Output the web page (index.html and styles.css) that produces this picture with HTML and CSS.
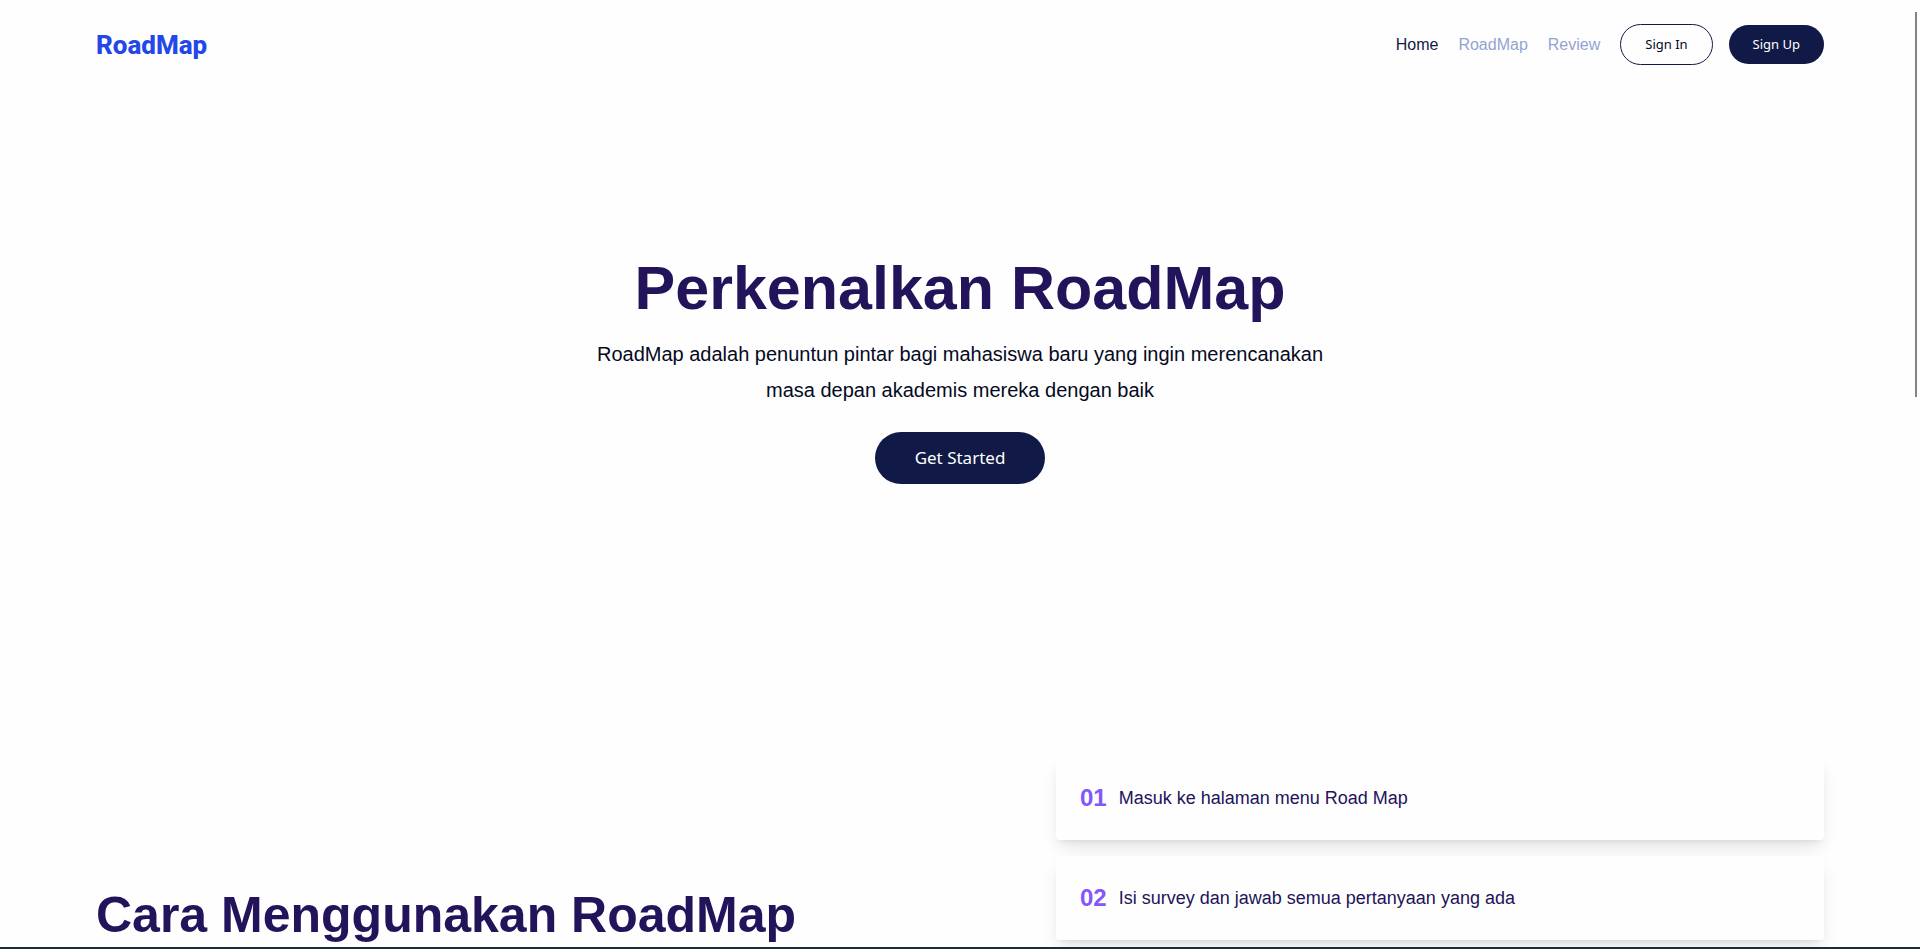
FILE: index.html
```html
<!DOCTYPE html>
<html lang="id">
<head>
<meta charset="utf-8">
<meta name="viewport" content="width=device-width, initial-scale=1">
<title>RoadMap</title>
<link rel="stylesheet" href="styles.css">
</head>
<body>
<header class="header">
  <a class="logo" href="#">RoadMap</a>
  <div class="menu">
    <nav class="nav">
      <a class="nav-link active" href="#">Home</a>
      <a class="nav-link" href="#">RoadMap</a>
      <a class="nav-link" href="#">Review</a>
    </nav>
    <div class="actions">
      <button class="btn btn-outline" type="button">Sign In</button>
      <button class="btn btn-solid" type="button">Sign Up</button>
    </div>
  </div>
</header>
<main>
  <section class="hero">
    <h1 class="hero-title">Perkenalkan RoadMap</h1>
    <p class="hero-text">RoadMap adalah penuntun pintar bagi mahasiswa baru yang ingin merencanakan masa depan akademis mereka dengan baik</p>
    <button class="btn btn-solid btn-large" type="button">Get Started</button>
  </section>
  <section class="guide">
    <h2 class="guide-title">Cara Menggunakan RoadMap</h2>
    <ol class="steps">
      <li class="step"><span class="step-number">01</span><span>Masuk ke halaman menu Road Map</span></li>
      <li class="step"><span class="step-number">02</span><span>Isi survey dan jawab semua pertanyaan yang ada</span></li>
    </ol>
  </section>
</main>
<div class="scroll-thumb" aria-hidden="true"></div>
<div class="bottom-edge" aria-hidden="true"></div>
</body>
</html>
```
FILE: styles.css
```css
* { box-sizing: border-box; }

body {
  margin: 0;
  height: 100vh;
  overflow: hidden;
  background: #fefefe;
  color: #050a1e;
  font-family: "Liberation Sans", Arial, sans-serif;
  font-size: 16px;
}

.header {
  display: flex;
  align-items: center;
  justify-content: space-between;
  padding: 24px 5% 23px;
}

.logo {
  color: #2347e8;
  font: 800 26px/40px Roboto, sans-serif;
  text-decoration: none;
}

.menu { display: flex; align-items: center; gap: 20px; }
.nav { display: flex; gap: 20px; }
.nav-link { color: #94a3d3; text-decoration: none; }
.nav-link.active { color: #111a47; }
.actions { display: flex; align-items: center; gap: 16px; }

.btn {
  padding: 0 24px;
  border: 0;
  border-radius: 26px;
  font: 13px/39px "Noto Sans", "Open Sans", sans-serif;
}
.btn-outline {
  border: 1px solid #111a47;
  background: #fefefe;
  color: #050a1e;
}
.btn-solid { background: #111a47; color: #fff; }
.btn-large { padding: 0 40px; font-size: 17px; line-height: 52px; }

.hero {
  display: flex;
  flex-direction: column;
  align-items: center;
  padding: 164px 5% 272px;
  text-align: center;
}
.hero-title {
  margin: 0 0 12px;
  color: #22135a;
  font-size: 61px;
  line-height: 72px;
}
.hero-text {
  max-width: 768px;
  margin: 0 0 24px;
  font-size: 20px;
  line-height: 36px;
}

.guide {
  display: grid;
  grid-template-columns: 5fr 4fr;
  padding: 0 5%;
}
.guide-title {
  margin: 0;
  padding-top: 129px;
  color: #22135a;
  font-size: 50px;
  line-height: 60px;
  white-space: nowrap;
}
.steps {
  display: grid;
  align-content: start;
  gap: 16px;
  margin: 0;
  padding: 0;
  list-style: none;
}
.step {
  display: flex;
  align-items: center;
  gap: 12px;
  height: 84px;
  padding: 24px;
  border-radius: 4px;
  background: #fefefe;
  box-shadow: 0 10px 18px -3px rgba(0, 0, 0, .11), 0 4px 6px -4px rgba(0, 0, 0, .1);
  color: #22135a;
  font-size: 18px;
}
.step-number { color: #8257fb; font-size: 24px; font-weight: 700; }

.scroll-thumb {
  position: fixed;
  top: 12px;
  right: 3px;
  width: 2px;
  height: 385px;
  background: #848484;
}
.bottom-edge {
  position: fixed;
  right: 0;
  bottom: 0;
  left: 0;
  height: 2px;
  background: #202938;
}
```
